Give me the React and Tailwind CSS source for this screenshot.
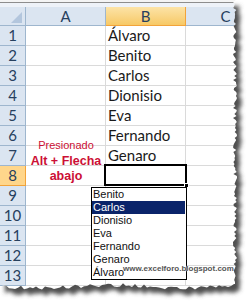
import React from "react";

const names = ["Álvaro", "Benito", "Carlos", "Dionisio", "Eva", "Fernando", "Genaro", "", "", "", "", "", ""];
const listItems = ["Benito", "Carlos", "Dionisio", "Eva", "Fernando", "Genaro", "Álvaro"];

// seeded noise so the torn edge stays the same every run
const makeRand = (seed) => () => {
  seed = (seed * 16807) % 2147483647;
  return (seed - 1) / 2147483646;
};

const buildPaper = () => {
  const r = makeRand(11);
  let d = "M0,0 L236,0";
  for (let y = 2; y <= 285; y += 2) {
    d += ` L${(234.5 + r() * 4 - 1.5).toFixed(1)},${y}`;
  }
  for (let x = 234; x >= 0; x -= 3) {
    const wave = Math.sin(x / 23) * 1.5;
    d += ` L${x},${(286 + wave + r() * 4 - 1.5).toFixed(1)}`;
  }
  return d + " Z";
};

const TornEdge = () => {
  const paper = buildPaper();
  return (
    <svg className="absolute inset-0" width="248" height="301">
      <defs>
        <filter id="blur" x="-10%" y="-10%" width="120%" height="120%">
          <feGaussianBlur stdDeviation="2" />
        </filter>
        <clipPath id="outside">
          <path clipRule="evenodd" d={`M0,0 H248 V301 H0 Z ${paper}`} />
        </clipPath>
      </defs>
      <g clipPath="url(#outside)">
        <rect width="248" height="301" fill="#ffffff" />
        <path d={paper} transform="translate(5,6)" fill="#4f4f4f" filter="url(#blur)" />
      </g>
    </svg>
  );
};

const cellFont = { fontFamily: "Lato, 'Open Sans', sans-serif" };

export default function App() {
  return (
    <div className="relative w-[248px] h-[301px] overflow-hidden bg-white" style={cellFont}>
      {/* formula bar remnant */}
      <div className="h-[7px] flex flex-col">
        <div className="h-[2px] bg-[#f4f4f4]" />
        <div className="h-[1px] bg-[#8d8d8d]" />
        <div className="flex-1 bg-[#eef2f8]" />
      </div>

      {/* column headers */}
      <div className="flex h-[19px] text-[15px] text-[#27405e]">
        <div className="relative w-[26px] shrink-0 bg-[#dbe5f1] border-r border-b border-[#9eb6ce]">
          <svg className="absolute left-0 top-0" width="25" height="18">
            <polygon points="22,5 22,16 11,16" fill="#b3c6dd" />
          </svg>
        </div>
        <div className="w-[80px] shrink-0 flex items-center justify-center bg-[#dbe5f1] border-r border-b border-[#9eb6ce]">A</div>
        <div className="w-[80px] shrink-0 flex items-center justify-center bg-gradient-to-b from-[#fce3a6] to-[#f7c965] border-r border-b border-[#f2a33a]">B</div>
        <div className="w-[80px] shrink-0 flex items-center justify-center bg-[#dbe5f1] border-r border-b border-[#9eb6ce]">C</div>
      </div>

      {/* rows */}
      {names.map((name, i) => (
        <div key={i} className="flex h-[20px] text-[15px]">
          <div
            className={`w-[26px] shrink-0 flex items-center justify-center border-r border-b text-[#27405e] ${
              i === 7 ? "bg-[#ffd68b] border-[#f2a33a]" : "bg-[#dbe5f1] border-[#9eb6ce]"
            }`}
          >
            {i + 1}
          </div>
          <div className="w-[80px] shrink-0 border-r border-b border-[#dadada]" />
          <div className="w-[80px] shrink-0 flex items-center pl-[2px] border-r border-b border-[#dadada] text-[#1a1a1a]">
            {name}
          </div>
          <div className="w-[80px] shrink-0 border-r border-b border-[#dadada]" />
        </div>
      ))}

      {/* note in column A */}
      <div
        className="absolute left-[26px] top-[138px] w-[80px] flex flex-col items-center text-[#cc0f35] leading-[15.5px]"
        style={{ fontFamily: "'Liberation Sans', Arial, sans-serif" }}
      >
        <span className="text-[11px]">Presionado</span>
        <span className="text-[12.5px] font-bold">Alt + Flecha</span>
        <span className="text-[12.5px] font-bold">abajo</span>
      </div>

      {/* active cell B8 */}
      <div className="absolute left-[104px] top-[164px] w-[83px] h-[22px] border-2 border-black" />
      <div className="absolute left-[184px] top-[183px] w-[5px] h-[5px] bg-black border border-white" />

      {/* dropdown list */}
      <div
        className="absolute left-[91px] top-[187px] w-[96px] bg-white border border-black"
        style={{ fontFamily: "'Liberation Sans', Arial, sans-serif" }}
      >
        {listItems.map((item) => (
          <div
            key={item}
            className={`h-[13px] leading-[13px] text-[11px] pl-[1px] mr-[1px] ${
              item === "Carlos" ? "bg-[#0a246a] text-white" : "text-[#111]"
            }`}
          >
            {item}
          </div>
        ))}
      </div>

      {/* watermark */}
      <div
        className="absolute left-[123px] top-[263px] text-[8px] font-bold text-[#555] [text-shadow:0_0_2px_#fff,0_0_1px_#fff]"
        style={{ fontFamily: "'Liberation Sans', Arial, sans-serif" }}
      >
        www.excelforo.blogspot.com
      </div>

      <TornEdge />
    </div>
  );
}
